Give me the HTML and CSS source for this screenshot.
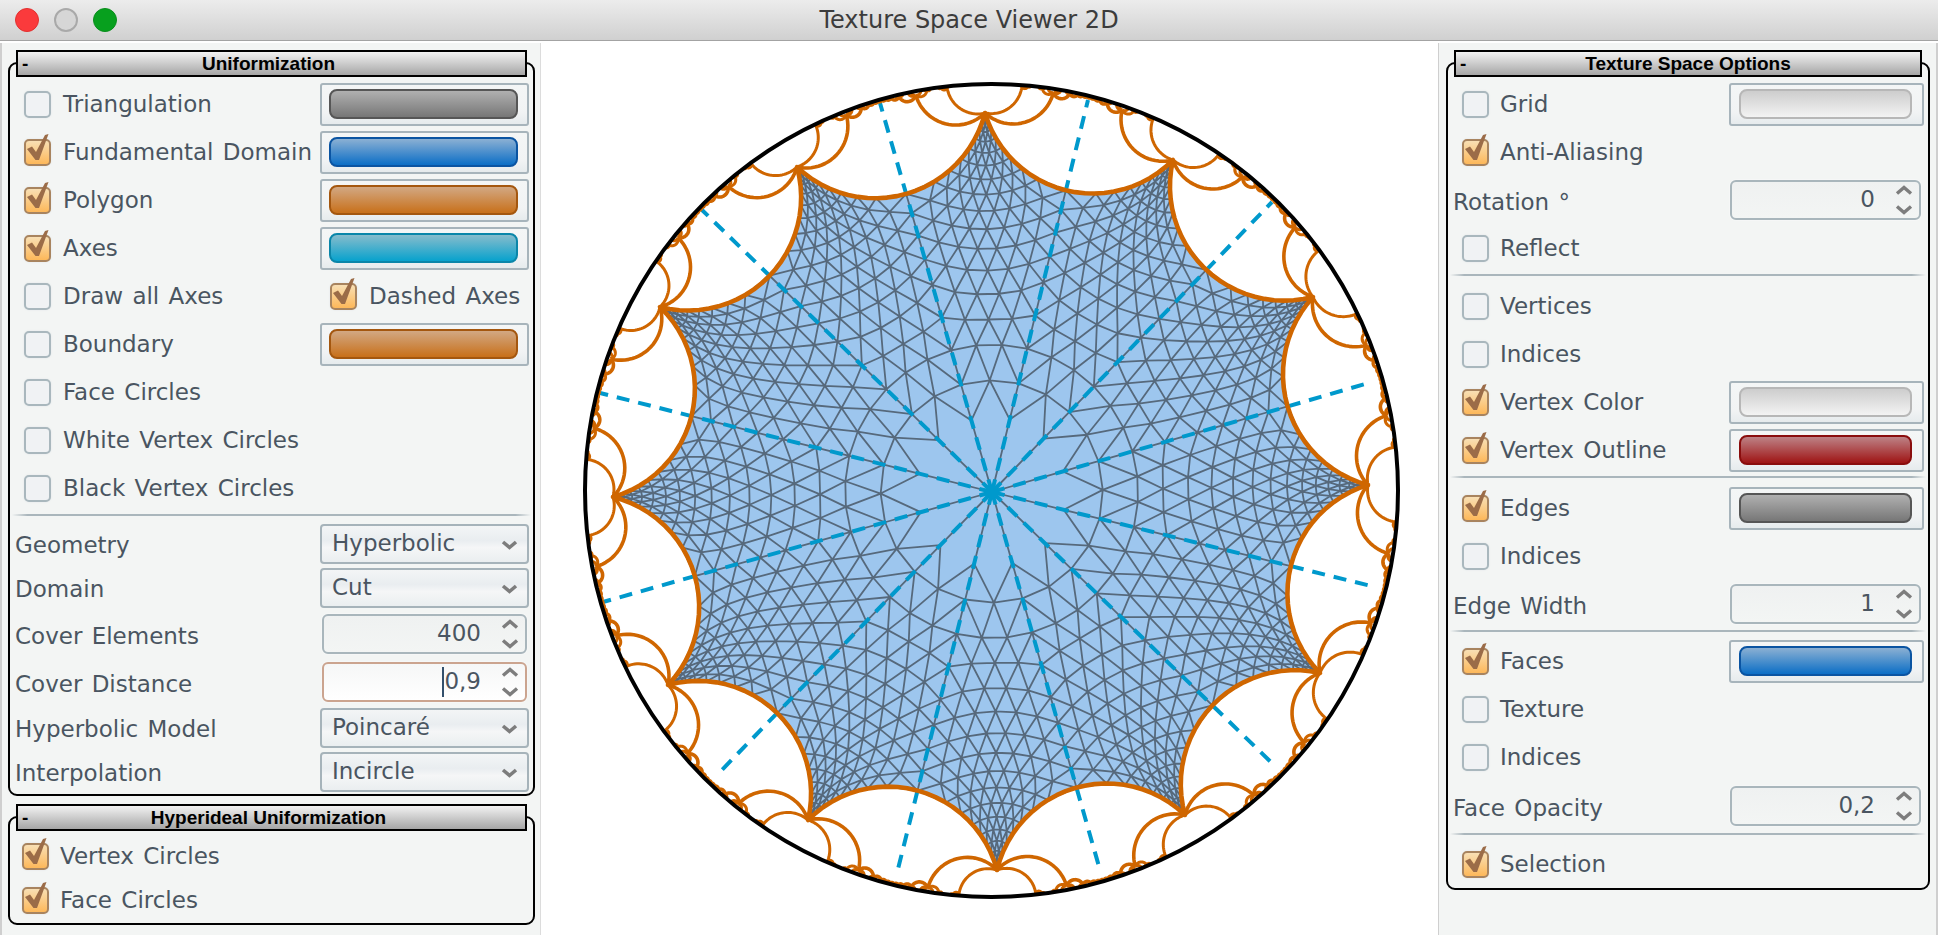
FILE: index.html
```html
<!DOCTYPE html>
<html lang="en">
<head>
    <meta charset="UTF-8">
    <title>Texture Space Viewer 2D</title>
    <link rel="stylesheet" href="styles.css">
</head>
<body>
    <svg class="sprite" width="0" height="0">
        <symbol id="tick" viewBox="0 0 27 32">
            <path d="M3 15 L8 12.5 L12 18 L21 1 L24.5 0 L15 26 L11.5 26 Z"/>
        </symbol>
        <symbol id="chev" viewBox="0 0 17 10">
            <path d="M2 2 L8.5 7.5 L15 2" fill="none" stroke-width="3.6"/>
        </symbol>
        <symbol id="spin" viewBox="0 0 18 32">
            <path d="M2 9.5 L9 3.5 L16 9.5" fill="none" stroke-width="3.4"/>
            <path d="M2 22.5 L9 28.5 L16 22.5" fill="none" stroke-width="3.4"/>
        </symbol>
    </svg>

    <div class="titlebar">
        <div class="lights">
            <span class="lamp lamp-red"></span>
            <span class="lamp lamp-off"></span>
            <span class="lamp lamp-green"></span>
        </div>
        <div class="title">Texture Space Viewer 2D</div>
    </div>

    <div class="main">
        <div class="panel left">
            <div class="group">
                <div class="header"><b>-</b><span>Uniformization</span></div>
                <div class="row"><label class="chk"><span class="cb"></span>Triangulation</label><div class="frame"><div class="swatch gray"></div></div></div>
                <div class="row"><label class="chk"><span class="cb on"><svg class="tick"><use href="#tick"/></svg></span>Fundamental Domain</label><div class="frame"><div class="swatch blue"></div></div></div>
                <div class="row"><label class="chk"><span class="cb on"><svg class="tick"><use href="#tick"/></svg></span>Polygon</label><div class="frame"><div class="swatch orange"></div></div></div>
                <div class="row"><label class="chk"><span class="cb on"><svg class="tick"><use href="#tick"/></svg></span>Axes</label><div class="frame"><div class="swatch cyan"></div></div></div>
                <div class="row"><label class="chk"><span class="cb"></span>Draw all Axes</label><div class="cell"><label class="chk"><span class="cb on"><svg class="tick"><use href="#tick"/></svg></span>Dashed Axes</label></div></div>
                <div class="row"><label class="chk"><span class="cb"></span>Boundary</label><div class="frame"><div class="swatch orange"></div></div></div>
                <div class="row"><label class="chk"><span class="cb"></span>Face Circles</label></div>
                <div class="row"><label class="chk"><span class="cb"></span>White Vertex Circles</label></div>
                <div class="row"><label class="chk"><span class="cb"></span>Black Vertex Circles</label></div>
                <div class="sep"></div>
                <div class="row short"><span>Geometry</span><div class="combo">Hyperbolic<svg class="chev"><use href="#chev"/></svg></div></div>
                <div class="row short"><span>Domain</span><div class="combo">Cut<svg class="chev"><use href="#chev"/></svg></div></div>
                <div class="row"><span>Cover Elements</span><div class="spinner">400<svg class="arrows"><use href="#spin"/></svg></div></div>
                <div class="row"><span>Cover Distance</span><div class="spinner focus"><i class="caret"></i>0,9<svg class="arrows"><use href="#spin"/></svg></div></div>
                <div class="row short"><span>Hyperbolic Model</span><div class="combo">Poincaré<svg class="chev"><use href="#chev"/></svg></div></div>
                <div class="row short"><span>Interpolation</span><div class="combo">Incircle<svg class="chev"><use href="#chev"/></svg></div></div>
            </div>
            <div class="group second">
                <div class="header"><b>-</b><span>Hyperideal Uniformization</span></div>
                <div class="row short"><label class="chk tight"><span class="cb on"><svg class="tick"><use href="#tick"/></svg></span>Vertex Circles</label></div>
                <div class="row short"><label class="chk tight"><span class="cb on"><svg class="tick"><use href="#tick"/></svg></span>Face Circles</label></div>
            </div>
        </div>

        <div class="view"><canvas id="disk" width="897" height="892"></canvas></div>

        <div class="panel right">
            <div class="group">
                <div class="header"><b>-</b><span>Texture Space Options</span></div>
                <div class="row"><label class="chk"><span class="cb"></span>Grid</label><div class="frame"><div class="swatch pale"></div></div></div>
                <div class="row"><label class="chk"><span class="cb on"><svg class="tick"><use href="#tick"/></svg></span>Anti-Aliasing</label></div>
                <div class="row"><span>Rotation °</span><div class="spinner">0<svg class="arrows"><use href="#spin"/></svg></div></div>
                <div class="row"><label class="chk"><span class="cb"></span>Reflect</label></div>
                <div class="sep"></div>
                <div class="row"><label class="chk"><span class="cb"></span>Vertices</label></div>
                <div class="row"><label class="chk"><span class="cb"></span>Indices</label></div>
                <div class="row"><label class="chk"><span class="cb on"><svg class="tick"><use href="#tick"/></svg></span>Vertex Color</label><div class="frame"><div class="swatch pale"></div></div></div>
                <div class="row"><label class="chk"><span class="cb on"><svg class="tick"><use href="#tick"/></svg></span>Vertex Outline</label><div class="frame"><div class="swatch crimson"></div></div></div>
                <div class="sep"></div>
                <div class="row"><label class="chk"><span class="cb on"><svg class="tick"><use href="#tick"/></svg></span>Edges</label><div class="frame"><div class="swatch gray"></div></div></div>
                <div class="row"><label class="chk"><span class="cb"></span>Indices</label></div>
                <div class="row"><span>Edge Width</span><div class="spinner">1<svg class="arrows"><use href="#spin"/></svg></div></div>
                <div class="sep small"></div>
                <div class="row"><label class="chk"><span class="cb on"><svg class="tick"><use href="#tick"/></svg></span>Faces</label><div class="frame"><div class="swatch blue"></div></div></div>
                <div class="row"><label class="chk"><span class="cb"></span>Texture</label></div>
                <div class="row"><label class="chk"><span class="cb"></span>Indices</label></div>
                <div class="row tall"><span>Face Opacity</span><div class="spinner">0,2<svg class="arrows"><use href="#spin"/></svg></div></div>
                <div class="sep small"></div>
                <div class="row"><label class="chk"><span class="cb on"><svg class="tick"><use href="#tick"/></svg></span>Selection</label></div>
            </div>
        </div>
    </div>
    <script src="disk.js"></script>
</body>
</html>
```

FILE: styles.css
```css
html, body {
    margin: 0;
    height: 100%;
    overflow: hidden;
    background: #fff;
}
body {
    font-family: "DejaVu Sans", sans-serif;
    font-size: 23px;
    word-spacing: 2px;
    color: #4a5561;
}
.sprite {
    position: absolute;
}

/* window title */
.titlebar {
    height: 41px;
    display: flex;
    align-items: center;
    position: relative;
    justify-content: center;
    background: linear-gradient(#ececec, #d0d0d0);
    border-bottom: 1px solid #a3a3a3;
    box-sizing: border-box;
}
.title {
    color: #3c3c3c;
    font-size: 24px;
    word-spacing: 0;
    margin-top: -1px;
}
.lights {
    position: absolute;
    left: 15px;
    top: 8px;
    display: flex;
    gap: 15px;
}
.lamp {
    width: 24px;
    height: 24px;
    border-radius: 50%;
    box-sizing: border-box;
}
.lamp-red { background: #fb3a3c; border: 1px solid #e2302f; }
.lamp-off { background: #d6d6d6; border: 2px solid #a9a9a9; }
.lamp-green { background: #07a01e; border: 1px solid #098e1c; }

/* columns */
.main {
    display: flex;
    height: 894px;
    padding-top: 2px;
}
.panel {
    background: #f3f5f4;
    box-sizing: border-box;
    overflow: hidden;
}
.panel.left {
    width: 541px;
    padding: 0 0 0 6px;
    border-left: 2px solid #cfcfcf;
    border-right: 1px solid #dcdcdc;
}
.panel.right {
    width: 500px;
    padding: 0 8px 0 7px;
    border-left: 1px solid #cfcfcf;
    border-right: 2px solid #cfcfcf;
}
.panel.right .group {
    width: 484px;
}
.view {
    flex: 1;
    background: #fff;
}
#disk {
    display: block;
}

/* titled groups */
.group {
    margin-top: 19px;
    border: 2px solid #000;
    border-radius: 9px;
    box-sizing: border-box;
    width: 527px;
}
.group.second {
    margin-top: 20px;
    padding-bottom: 1px;
}
.header {
    height: 27px;
    box-sizing: border-box;
    margin: -14px 6px 3px 6px;
    border: 2px solid #000;
    background: linear-gradient(#f2f2f2, #a6a6a6);
    display: grid;
    grid-template-columns: 1fr auto 1fr;
    align-items: center;
    padding: 0 4px;
    color: #000;
    font-family: "Liberation Sans", sans-serif;
    font-size: 19px;
    font-weight: bold;
    word-spacing: 0;
    line-height: 1;
}
.left .header {
    padding-right: 10px;
}
.row {
    height: 48px;
    display: flex;
    align-items: center;
    justify-content: space-between;
    padding: 0 4px 0 5px;
}
.row.short {
    height: 44px;
}
.row.tall {
    height: 50px;
}
.row > span {
    margin-top: 3px;
}
.row.short > span {
    margin-top: 1px;
}
.chk {
    display: flex;
    align-items: center;
    margin-left: 9px;
}
.chk.tight {
    margin-left: 7px;
}
.cell {
    width: 209px;
}
.cell .chk {
    margin-left: 10px;
}
.sep {
    height: 10px;
    margin: 0 2px;
    box-sizing: border-box;
    padding-top: 2px;
}
.sep.small {
    height: 9px;
}
.sep::before {
    content: "";
    display: block;
    height: 2px;
    background: linear-gradient(90deg, #f3f5f4, #aab6bc 3%, #aab6bc 97%, #f3f5f4);
}

/* checkboxes */
.cb {
    position: relative;
    width: 27px;
    height: 27px;
    box-sizing: border-box;
    margin-right: 11px;
    border: 2px solid #a9b7bd;
    border-radius: 5px;
    background: #f0f2f4;
    box-shadow: 0 0 2px #dfe4e6;
    flex: none;
}
.left .cb {
    margin-right: 12px;
}
.left .tight .cb {
    margin-right: 11px;
}
.cb.on {
    border-color: #a8845f;
    background: linear-gradient(#f8dfb4, #fdb85a);
}
.tick {
    position: absolute;
    left: -2px;
    top: -7px;
    width: 27px;
    height: 32px;
    fill: #9b6c48;
}

/* colour buttons */
.frame {
    width: 209px;
    height: 43px;
    box-sizing: border-box;
    border: 2px solid #a7b4bb;
    border-radius: 3px;
    background: linear-gradient(#f4f6f6, #f1f3f4 70%, #e6ebed);
    display: flex;
    align-items: center;
    padding: 0 9px 0 7px;
}
.panel.right .frame {
    width: 195px;
    padding: 0 10px 0 8px;
}
.swatch {
    flex: 1;
    height: 30px;
    box-sizing: border-box;
    border: 2px solid;
    border-radius: 8px;
}
.gray { background: linear-gradient(#b0b0b0, #777); border-color: #565656; }
.blue { background: linear-gradient(#8bb0d3, #0b6ec6); border-color: #0a54a2; }
.orange { background: linear-gradient(#d2a883, #c8701a); border-color: #a4570f; }
.cyan { background: linear-gradient(#87bccc, #07a2cd); border-color: #0a86a9; }
.pale { background: linear-gradient(#cdcdcd, #f3f3f3); border-color: #b7b7b7; }
.crimson { background: linear-gradient(#bd8286, #9f1414); border-color: #8a0d0d; }

/* combos and spinners */
.combo {
    width: 209px;
    height: 40px;
    box-sizing: border-box;
    border: 2px solid #a6b3ba;
    border-radius: 4px;
    background: linear-gradient(#f3f5f6, #e9edf0 40%, #f5f6f7 60%, #eaeef0);
    display: flex;
    align-items: center;
    justify-content: space-between;
    padding: 0 9px 3px 10px;
}
.chev {
    width: 17px;
    height: 10px;
    stroke: #7d7d7d;
    margin-top: 5px;
}
.spinner {
    width: 205px;
    height: 40px;
    margin-right: 2px;
    box-sizing: border-box;
    border: 2px solid #a9b6bc;
    border-radius: 6px;
    background: linear-gradient(#eff1f1, #f3f5f4);
    box-shadow: 0 0 2px #fff;
    display: flex;
    align-items: center;
    justify-content: flex-end;
    padding: 0 6px 2px 0;
}
.panel.right .spinner {
    width: 191px;
    margin-right: 3px;
}
.spinner.focus {
    border-color: #cba48f;
    background: linear-gradient(#f6f7f7, #fff);
}
.arrows {
    width: 18px;
    height: 32px;
    margin: 2px 0 0 20px;
    stroke: #7d7d7d;
}
.caret {
    width: 2px;
    height: 30px;
    margin-top: 2px;
    background: #33506c;
    flex: none;
}
```

FILE: disk.js
```js
// polygon corners and axis end points, in window pixels, clockwise from the top
const VERTS = [[985,113],[1173,160],[1313,297],[1368,485],[1320,673],[1185,815],
    [997,870],[808,820],[668,685],[613,497],[660,307],[797,167]];
const AXES = [[1088,100],[1272,202],[1372,382],[1375,587],[1275,766],[1100,870],
    [897,873],[717,775],[603,602],[600,393],[702,210],[880,103]];
const DISK = {x: 991.5, y: 490.5, r: 406.5};
const CENTER = [992, 492];

const RANK = [0,.24,.36,.475,.585,.695,.78,.86,.935,1];
const ALONG = [0,.26,.42,.56,.67,.77,.85,.91,.96,1];
const N = 9;
const RINGS = 3; // rings round the centre stay circular

// circle through p and q that meets the boundary at right angles
function geodesic(p, q) {
    let ax = p[0]-DISK.x, ay = p[1]-DISK.y, bx = q[0]-DISK.x, by = q[1]-DISK.y;
    let R2 = DISK.r*DISK.r;
    let det = ax*by - ay*bx;
    if (Math.abs(det) < 1e-3) return null;
    let e = (ax*ax+ay*ay+R2)/2, f = (bx*bx+by*by+R2)/2;
    let cx = (e*by - f*ay)/det, cy = (ax*f - bx*e)/det;
    return {x: cx+DISK.x, y: cy+DISK.y, r2: cx*cx+cy*cy-R2};
}

function arcPoint(g, p, q, t) {
    let a1 = Math.atan2(p[1]-g.y, p[0]-g.x), a2 = Math.atan2(q[1]-g.y, q[0]-g.x);
    let d = a2-a1;
    while (d > Math.PI) d -= 2*Math.PI;
    while (d < -Math.PI) d += 2*Math.PI;
    let r = Math.sqrt(g.r2), a = a1+d*t;
    return [g.x+r*Math.cos(a), g.y+r*Math.sin(a)];
}

function invert(pt, g) {
    let dx = pt[0]-g.x, dy = pt[1]-g.y;
    let f = g.r2/(dx*dx+dy*dy);
    return [g.x+dx*f, g.y+dy*f];
}

function traceArc(ctx, p, q, first) {
    let g = geodesic(p, q);
    if (first) ctx.moveTo(p[0], p[1]);
    if (!g) { ctx.lineTo(q[0], q[1]); return; }
    for (let i = 1; i <= 24; i++) {
        let s = arcPoint(g, p, q, i/24);
        ctx.lineTo(s[0], s[1]);
    }
}

// where an axis hits the side it crosses
function sideHit(axis, p, q) {
    let g = geodesic(p, q);
    let dx = axis[0]-CENTER[0], dy = axis[1]-CENTER[1];
    let l = Math.hypot(dx, dy);
    dx /= l; dy /= l;
    let ox = CENTER[0]-g.x, oy = CENTER[1]-g.y;
    let b = ox*dx+oy*dy, c = ox*ox+oy*oy-g.r2;
    let t = -b-Math.sqrt(Math.max(b*b-c, 0));
    return {pt: [CENTER[0]+t*dx, CENTER[1]+t*dy], g: g, len: t, ang: Math.atan2(dy, dx)};
}

function ringNode(a, b, i, j) {
    let f = j/(i+j);
    let d = b.ang-a.ang;
    while (d > Math.PI) d -= 2*Math.PI;
    while (d < -Math.PI) d += 2*Math.PI;
    let r = RANK[i+j]*(a.len*(1-f)+b.len*f);
    let t = a.ang+d*f;
    return [CENTER[0]+r*Math.cos(t), CENTER[1]+r*Math.sin(t)];
}

function buildMesh() {
    let hits = AXES.map((a, k) => sideHit(a, VERTS[k], VERTS[(k+1)%12]));
    let sectors = [];
    for (let k = 0; k < 12; k++) {
        let a = hits[(k+11)%12], b = hits[k], V = VERTS[k];
        let P = [];
        for (let i = 0; i <= N; i++) {
            P.push([]);
            for (let j = 0; j <= N; j++) {
                let w = i/N*0.5, v = j/N*0.5;
                P[i].push([
                    CENTER[0]+(a.pt[0]-CENTER[0])*w+(b.pt[0]-CENTER[0])*v,
                    CENTER[1]+(a.pt[1]-CENTER[1])*w+(b.pt[1]-CENTER[1])*v
                ]);
            }
        }
        for (let r = 0; r <= N; r++) {
            let c = RANK[r];
            P[r][0] = [CENTER[0]+(a.pt[0]-CENTER[0])*c, CENTER[1]+(a.pt[1]-CENTER[1])*c];
            P[0][r] = [CENTER[0]+(b.pt[0]-CENTER[0])*c, CENTER[1]+(b.pt[1]-CENTER[1])*c];
            P[N][r] = arcPoint(a.g, a.pt, V, ALONG[r]);
            P[r][N] = arcPoint(b.g, b.pt, V, ALONG[r]);
        }
        for (let i = 1; i < N; i++) for (let j = 1; j < N; j++) {
            if (i+j <= RINGS) P[i][j] = ringNode(a, b, i, j);
        }
        // relax the other inner nodes
        for (let it = 0; it < 400; it++) {
            for (let i = 1; i < N; i++) for (let j = 1; j < N; j++) {
                if (i+j <= RINGS) continue;
                let nb = [P[i+1][j],P[i-1][j],P[i][j+1],P[i][j-1],P[i+1][j-1],P[i-1][j+1]];
                P[i][j] = [
                    nb.reduce((s, n) => s+n[0], 0)/6,
                    nb.reduce((s, n) => s+n[1], 0)/6
                ];
            }
        }
        sectors.push(P);
    }
    return sectors;
}

function drawMesh(ctx, sectors) {
    ctx.beginPath();
    sectors.forEach(P => {
        for (let i = 0; i <= N; i++) for (let j = 0; j <= N; j++) {
            if (i < N) { ctx.moveTo(P[i][j][0], P[i][j][1]); ctx.lineTo(P[i+1][j][0], P[i+1][j][1]); }
            if (j < N) { ctx.moveTo(P[i][j][0], P[i][j][1]); ctx.lineTo(P[i][j+1][0], P[i][j+1][1]); }
            if (i < N && j < N && i+j > 0) { ctx.moveTo(P[i+1][j][0], P[i+1][j][1]); ctx.lineTo(P[i][j+1][0], P[i][j+1][1]); }
        }
    });
    ctx.strokeStyle = "#56697c";
    ctx.lineWidth = 1.8;
    ctx.stroke();
}

// copies of the polygon mirrored over its sides
function mirror(ctx, poly, from, depth, isCorner) {
    for (let s = 0; s < 12; s++) {
        if (s === from) continue;
        let p = poly[s], q = poly[(s+1)%12];
        if (Math.hypot(p[0]-q[0], p[1]-q[1]) < 3) continue;
        // third level only away from the original corners
        if (depth === 3 && (isCorner(p) || isCorner(q))) continue;
        let g = geodesic(p, q);
        if (!g) continue;
        let next = poly.map(v => invert(v, g));
        for (let e = 0; e < 12; e++) {
            if (e === s) continue;
            let a = next[e], b = next[(e+1)%12];
            if (Math.hypot(a[0]-b[0], a[1]-b[1]) < 2) continue;
            ctx.beginPath();
            traceArc(ctx, a, b, true);
            ctx.lineWidth = depth === 1 ? 3.6 : 3;
            ctx.stroke();
        }
        if (depth < 3) mirror(ctx, next, s, depth+1, isCorner);
    }
}

function draw() {
    let ctx = document.getElementById("disk").getContext("2d");
    ctx.translate(-541, -43);
    ctx.lineJoin = "round";

    ctx.beginPath();
    VERTS.forEach((v, k) => traceArc(ctx, v, VERTS[(k+1)%12], k === 0));
    ctx.closePath();
    ctx.fillStyle = "#9dc6ee";
    ctx.fill();

    drawMesh(ctx, buildMesh());

    ctx.strokeStyle = "#0099cc";
    ctx.lineWidth = 4;
    ctx.setLineDash([13, 9]);
    AXES.forEach(a => {
        ctx.beginPath();
        ctx.moveTo(CENTER[0], CENTER[1]);
        ctx.lineTo(a[0], a[1]);
        ctx.stroke();
    });
    ctx.setLineDash([]);
    ctx.fillStyle = "#0099cc";
    ctx.beginPath();
    ctx.arc(CENTER[0], CENTER[1], 6.5, 0, 2*Math.PI);
    ctx.fill();

    ctx.save();
    ctx.beginPath();
    ctx.arc(DISK.x, DISK.y, DISK.r, 0, 2*Math.PI);
    ctx.clip();
    ctx.strokeStyle = "#cf6600";
    let isCorner = pt => VERTS.some(v => Math.hypot(v[0]-pt[0], v[1]-pt[1]) < 1);
    mirror(ctx, VERTS, -1, 1, isCorner);
    ctx.beginPath();
    VERTS.forEach((v, k) => traceArc(ctx, v, VERTS[(k+1)%12], k === 0));
    ctx.closePath();
    ctx.lineWidth = 4.6;
    ctx.stroke();
    ctx.restore();

    ctx.strokeStyle = "#000";
    ctx.lineWidth = 4;
    ctx.beginPath();
    ctx.arc(DISK.x, DISK.y, DISK.r, 0, 2*Math.PI);
    ctx.stroke();
}

draw();
```
